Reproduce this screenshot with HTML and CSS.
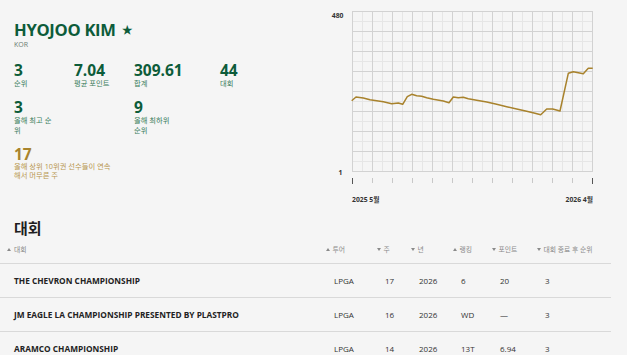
FILE: index.html
```html
<!DOCTYPE html>
<html lang="ko">
<head>
<meta charset="utf-8">
<title>HYOJOO KIM</title>
<link rel="stylesheet" href="styles.css">
</head>
<body>
<div class="page">
  <section class="top">
    <div class="profile">
      <h1 class="name">HYOJOO KIM <span class="star">★</span></h1>
      <div class="country">KOR</div>
      <div class="stats">
        <div class="stat c1"><div class="num">3</div><div class="lbl">순위</div></div>
        <div class="stat c2"><div class="num">7.04</div><div class="lbl">평균 포인트</div></div>
        <div class="stat c3"><div class="num">309.61</div><div class="lbl">합계</div></div>
        <div class="stat c4"><div class="num">44</div><div class="lbl">대회</div></div>
        <div class="stat c1"><div class="num">3</div><div class="lbl">올해 최고 순위</div></div>
        <div class="stat c3"><div class="num">9</div><div class="lbl">올해 최하위 순위</div></div>
        <div class="stat c1 wide gold"><div class="num">17</div><div class="lbl">올해 상위 10위권 선수들이 연속해서 머무른 주</div></div>
      </div>
    </div>
    <svg class="chart" viewBox="320 0 300 210" width="300" height="210">
      <g class="minor">
        <path d="M362.5 12V171M382.5 12V171M402.5 12V171M422.5 12V171M442.5 12V171M462.5 12V171M482.5 12V171M502.5 12V171M522.5 12V171M542.5 12V171M562.5 12V171M582.5 12V171"/>
        <path d="M352 21.5H592M352 41.5H592M352 61.5H592M352 81.5H592M352 101.5H592M352 121.5H592M352 141.5H592M352 161.5H592"/>
      </g>
      <g class="major">
        <path d="M352.5 11V172M372.5 11V172M392.5 11V172M412.5 11V172M432.5 11V172M452.5 11V172M472.5 11V172M492.5 11V172M512.5 11V172M532.5 11V172M552.5 11V172M572.5 11V172M592.5 11V172"/>
        <path d="M352 11.5H593M352 31.5H593M352 51.5H593M352 71.5H593M352 91.5H593M352 111.5H593M352 131.5H593M352 151.5H593M352 171.5H593"/>
      </g>
      <g class="ticks">
        <path d="M372.5 178V183M392.5 178V183M412.5 178V183M432.5 178V183M452.5 178V183M472.5 178V183M492.5 178V183M512.5 178V183M532.5 178V183M552.5 178V183M572.5 178V183"/>
      </g>
      <g class="ticks-end">
        <path d="M352.5 178V184M592.5 178V184"/>
      </g>
      <polyline class="line" points="351.7,100.7 356,97 363.3,98 370,99.7 383.3,101.7 391.7,103.7 398.3,103 402.7,104.3 407.3,96.7 411.7,94.3 416.7,95.7 421.7,96.3 426.7,97.7 433.3,99.3 443.3,101 449,102.7 453.3,97 458.3,97.7 463.3,97.3 468.3,98.7 476.7,100.3 486.7,102 496.7,104.3 506.7,106.7 516.7,109 526.7,111.3 535,113.3 540.7,114.7 546.7,109 552.7,109 560,111 568.3,73.3 573.3,71.7 583.3,73.7 588.3,68.3 592.7,68.3"/>
      <text class="axis" x="343.5" y="17.5" text-anchor="end">480</text>
      <text class="axis" x="342.5" y="174.5" text-anchor="end">1</text>
      <text class="axis" x="352" y="202" text-anchor="start">2025 5월</text>
      <text class="axis" x="593" y="202" text-anchor="end">2026 4월</text>
    </svg>
  </section>

  <section class="events">
    <h2 class="events-title">대회</h2>
    <div class="table">
      <div class="row head">
        <div class="th first asc">대회</div>
        <div class="th asc">투어</div>
        <div class="th desc">주</div>
        <div class="th desc">년</div>
        <div class="th asc">랭킹</div>
        <div class="th desc">포인트</div>
        <div class="th desc">대회 종료 후 순위</div>
      </div>
      <div class="row">
        <div class="td event">THE CHEVRON CHAMPIONSHIP</div>
        <div class="td">LPGA</div>
        <div class="td">17</div>
        <div class="td">2026</div>
        <div class="td">6</div>
        <div class="td">20</div>
        <div class="td">3</div>
      </div>
      <div class="row">
        <div class="td event">JM EAGLE LA CHAMPIONSHIP PRESENTED BY PLASTPRO</div>
        <div class="td">LPGA</div>
        <div class="td">16</div>
        <div class="td">2026</div>
        <div class="td">WD</div>
        <div class="td">—</div>
        <div class="td">3</div>
      </div>
      <div class="row">
        <div class="td event">ARAMCO CHAMPIONSHIP</div>
        <div class="td">LPGA</div>
        <div class="td">14</div>
        <div class="td">2026</div>
        <div class="td">13T</div>
        <div class="td">6.94</div>
        <div class="td">3</div>
      </div>
    </div>
  </section>
</div>
</body>
</html>
```

FILE: styles.css
```css
html, body {
  margin: 0;
  padding: 0;
  background: #f5f5f5;
}
body {
  font-family: "Open Sans", "Noto Sans CJK KR", sans-serif;
  color: #222;
  overflow: hidden;
}
.page {
  width: 627px;
}
.top {
  display: flex;
  align-items: flex-start;
}
.profile {
  width: 306px;
  padding: 19.5px 0 0 14px;
}
.name {
  margin: 0;
  font-size: 16.6px;
  line-height: 20px;
  font-weight: 700;
  color: #0d5c3a;
  letter-spacing: -0.3px;
}
.star {
  font-size: 11px;
  vertical-align: 2px;
  margin-left: 2px;
}
.country {
  font-size: 7px;
  line-height: 9px;
  color: #6c7a72;
}
.stats {
  margin-top: 13px;
  display: grid;
  grid-template-columns: 60px 60px 86px 1fr;
  row-gap: 10.5px;
}
.stat.c1 { grid-column: 1; }
.stat.c2 { grid-column: 2; }
.stat.c3 { grid-column: 3; }
.stat.c4 { grid-column: 4; }
.stat.wide { grid-column: 1 / span 3; }
.num {
  font-size: 15.5px;
  line-height: 16.5px;
  font-weight: 700;
  color: #0d5c3a;
}
.lbl {
  font-size: 7.3px;
  line-height: 10px;
  color: #3a7d5c;
  max-width: 42px;
}
.gold .num { color: #a9842c; }
.gold .lbl {
  color: #b8954e;
  max-width: 100px;
  line-height: 9px;
}
.chart {
  display: block;
}
.minor path { stroke: #e6e6e6; stroke-width: 1; fill: none; }
.major path { stroke: #d2d2d2; stroke-width: 1; fill: none; }
.ticks path { stroke: #c8c8c8; stroke-width: 1; fill: none; }
.ticks-end path { stroke: #555; stroke-width: 1; fill: none; }
.line {
  fill: none;
  stroke: #a8822c;
  stroke-width: 1.5;
  stroke-linejoin: round;
}
.axis {
  font-family: "Open Sans", "Noto Sans CJK KR", sans-serif;
  font-size: 6.8px;
  font-weight: 700;
  fill: #333;
}
.events-title {
  margin: 7.7px 0 0 14px;
  font-size: 15px;
  line-height: 20px;
  font-weight: 700;
  color: #1e1e1e;
}
.table {
  width: 611px;
}
.row {
  display: grid;
  grid-template-columns: 326px 51px 34px 42px 39px 45px 74px;
  height: 33px;
  align-items: center;
  border-bottom: 1px solid #d9d9d9;
}
.row.head {
  height: 23px;
  padding-bottom: 2px;
}
.th {
  font-size: 6.8px;
  color: #8a8a8a;
  white-space: nowrap;
  display: flex;
  align-items: center;
}
.th.first {
  padding-left: 7px;
}
.th::before {
  content: "";
  display: inline-block;
  width: 0;
  height: 0;
  border-left: 2px solid transparent;
  border-right: 2px solid transparent;
  margin-right: 2.5px;
}
.th.first::before { margin-right: 3px; }
.th.asc::before { border-bottom: 3px solid #8a8a8a; }
.th.desc::before { border-top: 3px solid #8a8a8a; }
.td {
  font-size: 8px;
  color: #333;
  padding-left: 8px;
  white-space: nowrap;
}
.td.event {
  padding-left: 14px;
  font-weight: 700;
  font-size: 8.3px;
  color: #222;
}
```
